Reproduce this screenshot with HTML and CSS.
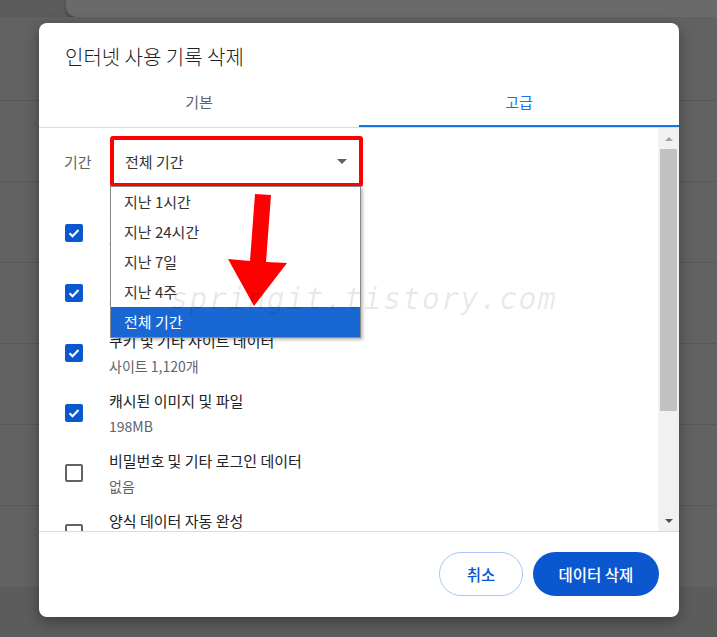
FILE: index.html
```html
<!doctype html>
<html>
<head>
<meta charset="utf-8">
<title>인터넷 사용 기록 삭제</title>
<link rel="stylesheet" href="styles.css">
</head>

<body>

<div class="backdrop">
	<div class="top_card"></div>
	<ul class="bg_list">
		<li></li>
		<li></li>
		<li></li>
		<li></li>
		<li></li>
		<li></li>
	</ul>
</div>

<div class="dialog">
	<h1 class="title">인터넷 사용 기록 삭제</h1>
	<div class="tabs">
		<div class="tab">기본</div>
		<div class="tab on">고급</div>
	</div>

	<div class="body">
		<div class="scroll">
			<div class="range">
				<span class="range_label">기간</span>
				<div class="select_wrap">
					<div class="select">
						<span>전체 기간</span>
						<i class="caret"></i>
					</div>
					<ul class="options">
						<li>지난 1시간</li>
						<li>지난 24시간</li>
						<li>지난 7일</li>
						<li>지난 4주</li>
						<li class="sel">전체 기간</li>
					</ul>
				</div>
			</div>

			<div class="item">
				<span class="cb on"><svg viewBox="0 0 18 18"><path d="M4.5 9.2l3 3L13.5 6"/></svg></span>
				<div class="txt"><div class="name">인터넷 사용 기록</div><div class="sub">없음</div></div>
			</div>
			<div class="item">
				<span class="cb on"><svg viewBox="0 0 18 18"><path d="M4.5 9.2l3 3L13.5 6"/></svg></span>
				<div class="txt"><div class="name">다운로드 기록</div><div class="sub">없음</div></div>
			</div>
			<div class="item">
				<span class="cb on"><svg viewBox="0 0 18 18"><path d="M4.5 9.2l3 3L13.5 6"/></svg></span>
				<div class="txt"><div class="name">쿠키 및 기타 사이트 데이터</div><div class="sub">사이트 1,120개</div></div>
			</div>
			<div class="item">
				<span class="cb on"><svg viewBox="0 0 18 18"><path d="M4.5 9.2l3 3L13.5 6"/></svg></span>
				<div class="txt"><div class="name">캐시된 이미지 및 파일</div><div class="sub">198MB</div></div>
			</div>
			<div class="item">
				<span class="cb"></span>
				<div class="txt"><div class="name">비밀번호 및 기타 로그인 데이터</div><div class="sub">없음</div></div>
			</div>
			<div class="item">
				<span class="cb"></span>
				<div class="txt"><div class="name">양식 데이터 자동 완성</div></div>
			</div>
		</div>

		<div class="scrollbar">
			<span class="sb_btn"><i class="up"></i></span>
			<div class="sb_track"><div class="thumb"></div></div>
			<span class="sb_btn"><i class="down"></i></span>
		</div>
	</div>

	<div class="foot">
		<a href="javascript:;" class="btn cancel">취소</a>
		<a href="javascript:;" class="btn del">데이터 삭제</a>
	</div>
</div>

<!-- 강조 화살표 -->
<svg class="arrow" viewBox="0 0 717 637">
	<polygon points="255,194 271,195 266,262 287,263 254,306 228,259 250,261"/>
</svg>

<div class="wm">springit.tistory.com</div>

</body>
</html>
```

FILE: styles.css
```css
*{margin:0;padding:0;box-sizing:border-box;}
body{width:717px;height:637px;overflow:hidden;background:#5c5c5c;font-family:"Noto Sans CJK KR","Liberation Sans",sans-serif;color:#202124;position:relative;}
ul{list-style:none;}
a{text-decoration:none;}

/* 뒤쪽 페이지 */
.top_card{margin-left:66px;height:17px;background:#6a6a6a;border-bottom-left-radius:10px;box-shadow:0 2px 3px rgba(0,0,0,.3);}
.bg_list{height:570px;background:#626262;padding-top:3px;}
.bg_list li{height:81px;border-bottom:1px solid #585858;}

/* 대화상자 */
.dialog{position:absolute;left:39px;top:23px;width:640px;height:594px;background:#fff;border-radius:8px;box-shadow:0 4px 14px rgba(0,0,0,.35);display:flex;flex-direction:column;overflow:hidden;z-index:1;}
.title{height:56px;padding:20px 0 0 26px;font-size:20px;line-height:28px;font-weight:300;color:#202124;}

.tabs{display:flex;border-bottom:1px solid #dadce0;}
.tab{flex:1;height:48px;line-height:46px;text-align:center;font-size:15px;color:#5f6368;border-bottom:2px solid transparent;}
.tab.on{color:#1a73e8;border-bottom-color:#1a73e8;}

.body{height:403px;display:flex;}
.scroll{flex:1;overflow:hidden;padding:8px 0 0 25px;}

.range{display:flex;align-items:center;margin-bottom:16px;}
.range_label{width:46px;font-size:15px;line-height:22px;color:#5f6368;}
.select_wrap{position:relative;}
.select{width:253px;height:51px;border:4px solid #f00;border-radius:3px;display:flex;align-items:center;justify-content:space-between;padding:0 12px 0 11px;font-size:15px;color:#333;}
.caret{width:0;height:0;border-left:5px solid transparent;border-right:5px solid transparent;border-top:5px solid #5f6368;}
.options{position:absolute;left:0;top:50px;width:251px;background:#fff;border:1px solid #8a8a8a;box-shadow:2px 2px 3px rgba(0,0,0,.25);z-index:2;}
.options li{height:30px;line-height:30px;padding-left:13px;font-size:15px;color:#333;}
.options li.sel{background:#1967d2;color:#fff;}

.item{height:60px;display:flex;align-items:center;}
.cb{width:18px;height:18px;margin-left:1px;margin-right:26px;border:2px solid #5f6368;border-radius:2px;flex-shrink:0;}
.cb.on{background:#0b57d0;border-color:#0b57d0;}
.cb svg{display:block;width:18px;height:18px;margin:-2px;}
.cb path{fill:none;stroke:#fff;stroke-width:2;}
.txt{padding-top:1px;}
.name{font-size:15px;line-height:22px;color:#202124;}
.sub{font-size:14px;line-height:22px;margin-top:3px;color:#5f6368;}
.item:last-child .txt{padding-top:0;margin-top:-25px;}

/* 스크롤바 */
.scrollbar{width:21px;background:#f1f1f1;display:flex;flex-direction:column;align-items:center;}
.sb_btn{height:21px;width:100%;display:flex;align-items:center;justify-content:center;}
.sb_track{flex:1;width:100%;padding:0 2px;}
.thumb{height:262px;background:#c1c1c1;}
.up{border-left:4px solid transparent;border-right:4px solid transparent;border-bottom:4px solid #a3a3a3;}
.down{border-left:4px solid transparent;border-right:4px solid transparent;border-top:4px solid #505050;}

.foot{border-top:1px solid #dadce0;padding:20px 20px 21px;display:flex;justify-content:flex-end;gap:10px;}
.btn{height:44px;border-radius:22px;font-size:15.5px;font-weight:500;display:flex;align-items:center;justify-content:center;}
.cancel{width:84px;border:1px solid #a8c7fa;color:#0b57d0;}
.del{width:126px;background:#0b57d0;color:#fff;}

/* 주석 */
.arrow{position:absolute;left:0;top:0;width:717px;height:637px;pointer-events:none;z-index:5;}
.arrow polygon{fill:#f00;}
.wm{position:absolute;left:170px;top:284px;font-family:"DejaVu Sans Mono",monospace;font-style:italic;font-size:30px;line-height:30px;letter-spacing:1.3px;color:rgba(0,0,0,.09);pointer-events:none;z-index:6;}
```
